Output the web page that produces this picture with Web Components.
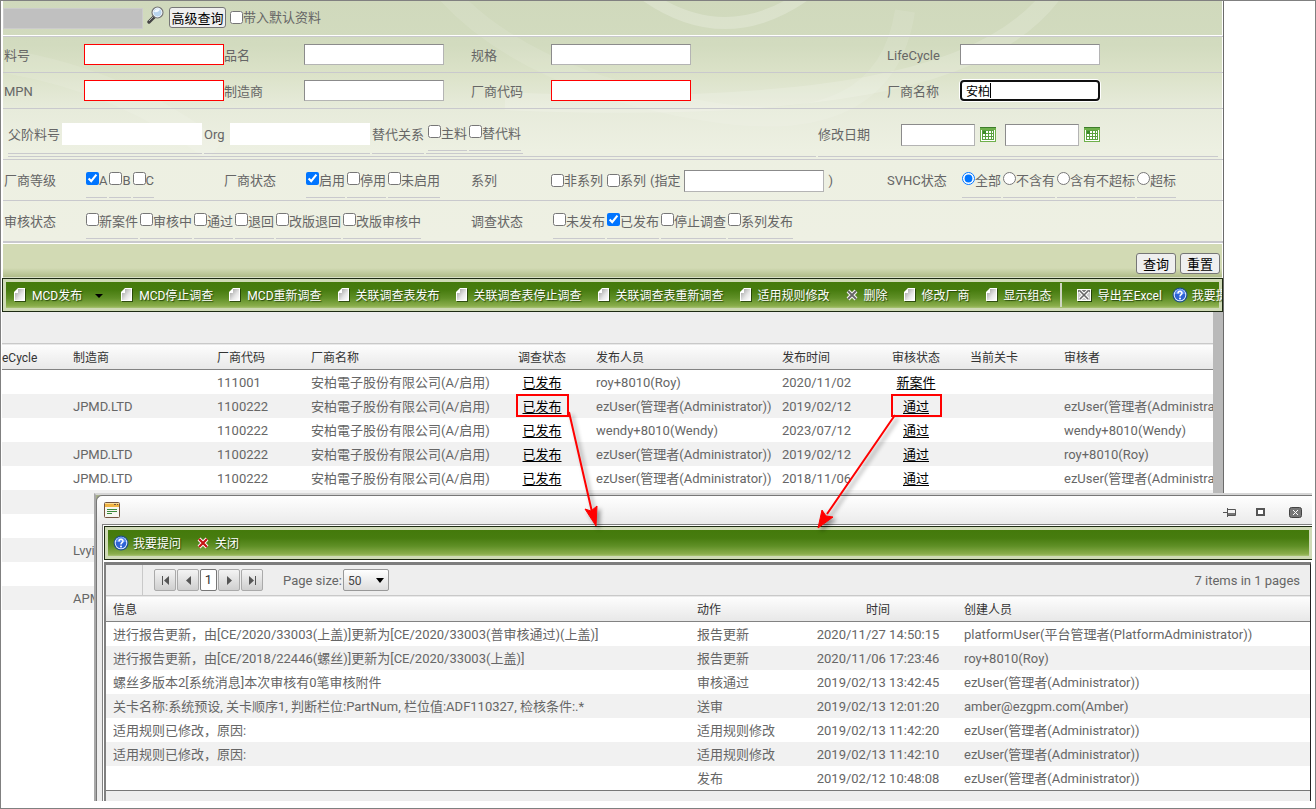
<!DOCTYPE html>
<html lang="zh-CN">
<head>
<meta charset="utf-8">
<title>MCD 发布管理</title>
<style>
  html, body { margin: 0; background: #fff; }
  body { font: 13px/18px Roboto, "Noto Sans CJK SC", sans-serif; color: #666; }
</style>
</head>
<body>
<page-frame>
  <app-panel>
    <quick-bar></quick-bar>
    <criteria-form></criteria-form>
    <form-actions></form-actions>
    <tool-bar>
      <tool-item icon="page" arrow>MCD发布</tool-item>
      <tool-item icon="page">MCD停止调查</tool-item>
      <tool-item icon="page">MCD重新调查</tool-item>
      <tool-item icon="page">关联调查表发布</tool-item>
      <tool-item icon="page">关联调查表停止调查</tool-item>
      <tool-item icon="page">关联调查表重新调查</tool-item>
      <tool-item icon="page">适用规则修改</tool-item>
      <tool-item icon="cross">删除</tool-item>
      <tool-item icon="page">修改厂商</tool-item>
      <tool-item icon="page">显示组态</tool-item>
      <tool-item icon="excel" divided>导出至Excel</tool-item>
      <tool-item icon="help">我要提问</tool-item>
    </tool-bar>
    <survey-grid></survey-grid>
  </app-panel>
  <history-window slot="overlay">
    <tool-bar slot="tools">
      <tool-item icon="help">我要提问</tool-item>
      <tool-item icon="close">关闭</tool-item>
    </tool-bar>
    <history-grid></history-grid>
  </history-window>
  <call-outs slot="overlay"></call-outs>
</page-frame>

<script>
const define = (name, html) => {
  const template = document.createElement('template');
  customElements.define(name, class extends HTMLElement {
    connectedCallback() {
      if (this.shadowRoot) return;
      template.innerHTML = typeof html === 'function' ? html(this) : html;
      this.attachShadow({ mode: 'open' }).append(template.content.cloneNode(true));
    }
  });
};

const ICONS = {
  page: `<svg width="12" height="14" viewBox="0 0 12 14"><defs><linearGradient id="g" x1="0" y1="0" x2="1" y2="1"><stop offset="0" stop-color="#9a9a9a"/><stop offset=".6" stop-color="#e6e6e6"/><stop offset="1" stop-color="#fff"/></linearGradient></defs><path d="M3 1h9v13H1V4z" fill="#1e3a05" opacity=".8"/><path d="M4 0h7v13H0V4z" fill="#fff"/><path d="M4 1h6v11H1V5h3z" fill="url(#g)"/><path d="M4 1v4H1z" fill="#fff"/></svg>`,
  cross: `<svg width="13" height="12" viewBox="0 0 13 12"><path d="M2 2l8 8M10 2l-8 8" stroke="#f4f4f4" stroke-width="4"/><path d="M2 2l8 8M10 2l-8 8" stroke="#666" stroke-width="1.800"/></svg>`,
  close: `<svg width="13" height="12" viewBox="0 0 13 12"><path d="M2 2l8 8M10 2l-8 8" stroke="#fff" stroke-width="4"/><path d="M2 2l8 8M10 2l-8 8" stroke="#c31313" stroke-width="2.200"/></svg>`,
  excel: `<svg width="15" height="13" viewBox="0 0 15 13"><path d="M1 1h14v12H1z" fill="#24430a"/><path d="M0 0h14v12H0z" fill="#fff"/><path d="M1 1h12v2H1z" fill="#777"/><path d="M1 3h12v8H1z" fill="#ccc"/><path d="M3 2l8 8M11 2l-8 8" stroke="#fff" stroke-width="3.600"/><path d="M3 2l8 8M11 2l-8 8" stroke="#666" stroke-width="1.600"/></svg>`,
  help: `<svg width="16" height="16" viewBox="0 0 16 16"><circle cx="8" cy="8" r="7.500" fill="#1d4f86"/><circle cx="8" cy="8" r="6.300" fill="#dfeaff"/><circle cx="8" cy="8" r="5.300" fill="#2e63d6"/><path d="M3 7a5 5 0 0 1 10 0z" fill="#5b8cf0"/><path d="M6 6.500c0-2.800 4-2.800 4-.3 0 1.500-2 1.500-2 3.200" fill="none" stroke="#fff" stroke-width="1.500"/><circle cx="8" cy="11.500" r="1" fill="#fff"/></svg>`,
  search: `<svg width="17" height="18" viewBox="0 0 17 18"><path d="M2 16l5-5" stroke="#444" stroke-width="3.400" stroke-linecap="round"/><path d="M2 15l4-4" stroke="#aaa" stroke-width="1"/><circle cx="10.500" cy="6.500" r="5.400" fill="#b9d4ee" stroke="#777" stroke-width="1.400"/><circle cx="10.500" cy="6.500" r="4.400" fill="none" stroke="#f4f8fc"/><path d="M7 6a4 4 0 0 1 6-2.500c-1 2-3 3-6 2.500z" fill="#f3f9ff"/></svg>`,
  calendar: `<svg width="16" height="15" viewBox="0 0 16 15"><path d="M0 0h16v15H0z" fill="#6fb04b"/><path d="M0 0h16v1H0z" fill="#3d7d2a"/><path d="M1 3h14v11H1z" fill="#fff"/><path d="M2 3h12v10H2z" fill="#59a23f"/><path d="M3 5h2v2H3zM6 4h2v2H6zM9 4h2v2H9zM12 4h1v2h-1zM3 7h2v2H3zM6 7h2v2H6zM9 7h2v2H9zM12 7h1v2h-1zM3 10h2v2H3zM6 10h2v2H6zM9 10h2v2H9zM12 10h1v2h-1z" fill="#fff"/><path d="M3 4h3v3H3z" fill="#3d8c2a"/></svg>`
};

const INPUT = `
  input { font: inherit; }
  input[type=text] { box-sizing: border-box; width: 100%; height: 21px; padding: 0 5px; border: 1px solid #8b8b8b; border-right-color: #b4b4b4; border-bottom-color: #b4b4b4; border-radius: 0; background: #fff; outline: 0; color: #000; font-size: 12px; }
  button { font: 13px/17px "Noto Sans CJK SC", sans-serif; color: #000; box-sizing: border-box; height: 21px; border: 1px solid #767676; border-radius: 3px; background: #efefef; padding: 0; white-space: nowrap; }
`;

define('page-frame', `<style>
  :host { display: block; position: relative; box-sizing: border-box; min-height: 100vh; border: 1px solid #808080; background: #fff; overflow: hidden; }
</style><slot></slot><slot name="overlay"></slot>`);

define('app-panel', `<style>
  :host { display: block; box-sizing: border-box; width: calc(100% - 91px); padding-left: 1px; border-right: 1px solid #6b6b6b; overflow: hidden; position: relative; }
  .swirl { position: absolute; left: 2px; top: 0; width: 1219px; height: 240px; }
  .back { position: absolute; left: 2px; right: 1px; top: 0; height: 240px; background: linear-gradient(#d0d9bc, #d2dbbf 44px, #dbe2c8 72px, #e7ebdb 108px, #edf0e2 150px, #eef0e3); overflow: hidden; }
  .front { position: relative; }
</style>
<div class="back"><svg class="swirl" viewBox="0 0 1219 240" fill="none" stroke="#fff" aria-hidden="true">
  <path d="M640 -6Q720 50 800 -6" stroke-width="12" opacity=".22"/>
  <path d="M1050 -10Q1000 60 860 85T500 100" stroke-width="18" opacity=".16"/>
  <path d="M440 -10Q520 80 700 110T900 10" stroke-width="20" opacity=".1"/>
  <path d="M0 60Q120 80 210 150" stroke-width="24" opacity=".1"/>
</svg></div>
<div class="front"><slot></slot></div>`);

define('quick-bar', `<style>${INPUT}
  :host { display: flex; align-items: center; height: 34px; margin-left: 1px; border-bottom: 1px solid #fff; white-space: nowrap; }
  input[type=text] { width: 140px; height: 21px; background: #c0c0c0; border: 1px solid #ccc; }
  .find { display: grid; width: 17px; height: 18px; border: 0; background: none; margin: 0 5px 6px 4px; }
  .find + button { width: 57px; margin-bottom: 1px; }
  label { display: flex; align-items: center; margin-left: 4px; }
  label input { margin: 0 0 2px; width: 13px; height: 13px; }
</style>
<input type="text" disabled aria-label="关键字"><button class="find" aria-label="搜索">${ICONS.search}</button><button>高级查询</button><label><input type="checkbox">带入默认资料</label>`);

define('text-field', el => `<style>${INPUT}
  :host { display: grid; grid-template-columns: var(--label, 80px) var(--field, 140px); align-items: center; white-space: nowrap; }
  :host([required]) input { border: 1px solid #f00; }
  :host([plain]) input { border: 1px solid #fff; height: 22px; }
  :host([active]) input { border: 2px solid #101010; border-radius: 4px; padding-left: 4px; box-shadow: 0 0 0 1px #fff; background: linear-gradient(#000, #000) 28px 1px / 1px 15px no-repeat #fff; }
  label { padding-top: 2px; }
</style>
<label for="f">${el.getAttribute('label')}</label><input type="text" id="f" value="${el.getAttribute('value') || ''}">`);

define('check-item', el => `<style>
  :host { display: block; box-sizing: border-box; height: 36px; padding-top: 8px; border-bottom: 1px solid #c9c9cd; white-space: nowrap; }
  label { display: flex; align-items: start; line-height: 22px; }
  input { margin: 2px 0 0; width: 13px; height: 13px; }
</style>
<label><input type="${el.getAttribute('type') || 'checkbox'}" ${el.hasAttribute('checked') ? 'checked' : ''}><span><slot></slot></span></label>`);

define('check-group', el => `<style>
  :host { display: grid; grid-template-columns: var(--label, 80px) auto; align-items: center; justify-content: start; white-space: nowrap; }
  #name { padding-top: 2px; }
  .items { display: flex; gap: 2px; padding-left: 2px; }
</style>
<span id="name">${el.getAttribute('label')}</span><div class="items" role="group" aria-labelledby="name"><slot></slot></div>`);

define('date-field', el => `<style>${INPUT}
  :host { display: flex; align-items: center; gap: 5px; }
  input[type=text] { width: 74px; height: 22px; }
  button { display: grid; width: 16px; height: 15px; border: 0; background: none; }
</style>
<input type="text" aria-label="${el.getAttribute('label')}"><button aria-label="选择日期">${ICONS.calendar}</button>`);

define('series-field', `<style>${INPUT}
  :host { display: flex; align-items: center; line-height: 20px; white-space: nowrap; padding-top: 2px; }
  .name { width: 80px; }
  .opt { display: flex; align-items: center; margin-right: 4px; }
  .opt input { width: 13px; height: 13px; margin: 0 0 2px; }
  .text { display: flex; align-items: center; gap: 4px; }
  .text input { width: 140px; height: 22px; }
</style>
<span class="name">系列</span>
<label class="opt"><input type="checkbox">非系列</label><label class="opt"><input type="checkbox">系列</label>
<label class="text">(指定<input type="text">)</label>`);

define('criteria-form', `<style>
  :host { display: block; margin-left: 1px; border-top: 1px solid #c9c9cd; border-bottom: 1px solid #c9c9cd; }
  .row { display: grid; grid-template-columns: 220px 247px 416px 1fr; align-items: center; box-sizing: border-box; height: 36px; padding-left: 1px; border-bottom: 1px solid #c9c9cd; }
  .tall { height: 41px; }
  .states { grid-template-columns: 467px 1fr; }
  .wide { --label: 73px; }
  .parts { display: flex; align-items: end; height: 51px; padding: 0 5px 2px; }
  .inner { display: flex; align-items: end; gap: 2px; box-sizing: border-box; height: 48px; border-bottom: 1px solid #c9c9cd; }
  .left { flex: 0 0 808px; }
  .left text-field { box-sizing: border-box; height: 40px; border-bottom: 1px solid #c9c9cd; margin-bottom: 2px; }
  .one { --label: 54px; } .two { --label: 26px; }
  .rel { display: flex; align-items: center; box-sizing: border-box; width: 52px; height: 40px; padding-top: 2px; margin-bottom: 2px; border-bottom: 1px solid #c9c9cd; white-space: nowrap; }
  .checks { display: flex; gap: 2px; padding: 0 2px 2px; border-bottom: 1px solid #c9c9cd; margin-bottom: 2px; }
  .checks check-item { height: 28px; padding-top: 0; }
  .right { flex: 1; margin-left: 2px; align-items: center; gap: 9px; padding-top: 4px; }
  .right span { width: 74px; }
</style>
<div class="row"><text-field label="料号" required></text-field><text-field label="品名"></text-field><text-field label="规格"></text-field><text-field class="wide" label="LifeCycle"></text-field></div>
<div class="row"><text-field label="MPN" required></text-field><text-field label="制造商"></text-field><text-field label="厂商代码" required></text-field><text-field class="wide" label="厂商名称" value="安柏" active></text-field></div>
<div class="row parts">
  <div class="inner left"><text-field class="one" label="父阶料号" plain></text-field><text-field class="two" label="Org" plain></text-field><span class="rel">替代关系</span><div class="checks"><check-item>主料</check-item><check-item>替代料</check-item></div></div>
  <div class="inner right"><span>修改日期</span><date-field label="修改日期起"></date-field><date-field label="修改日期止"></date-field></div>
</div>
<div class="row tall">
  <check-group label="厂商等级"><check-item checked>A</check-item><check-item>B</check-item><check-item>C</check-item></check-group>
  <check-group label="厂商状态"><check-item checked>启用</check-item><check-item>停用</check-item><check-item>未启用</check-item></check-group>
  <series-field></series-field>
  <check-group class="wide" label="SVHC状态"><check-item type="radio" checked>全部</check-item><check-item type="radio">不含有</check-item><check-item type="radio">含有不超标</check-item><check-item type="radio">超标</check-item></check-group>
</div>
<div class="row tall states">
  <check-group label="审核状态"><check-item>新案件</check-item><check-item>审核中</check-item><check-item>通过</check-item><check-item>退回</check-item><check-item>改版退回</check-item><check-item>改版审核中</check-item></check-group>
  <check-group label="调查状态"><check-item>未发布</check-item><check-item checked>已发布</check-item><check-item>停止调查</check-item><check-item>系列发布</check-item></check-group>
</div>`);

define('form-actions', `<style>${INPUT}
  :host { display: flex; justify-content: end; align-items: center; gap: 4px; box-sizing: border-box; height: 35px; margin-left: 1px; margin-right: 1px; padding: 6px 2px 0; border-top: 1px solid #fff; border-bottom: 1px solid #d9dfc6; background: linear-gradient(#d2dab4, #d2dab4 24px, #b0bc89); }
  button { width: 40px; }
</style><button>查询</button><button>重置</button>`);

define('tool-bar', `<style>
  :host { display: flex; align-items: center; gap: 16px; box-sizing: border-box; height: 34px; padding-left: 11px; border: 1px solid #1d2a12; font-size: 12px; color: #fff; white-space: nowrap; overflow: hidden;
    background: linear-gradient(#447a0b, #477c0f 8px, #5f8f26 16px, #8bae4c 24px, #a9c476) 3px 3px / calc(100% - 6px) 26px no-repeat #cfdab6; }
</style><slot></slot>`);

define('tool-item', el => `<style>
  :host { display: block; flex: none; }
  :host([divided]) { margin: 0 -6px 0 -8px; padding-left: 15px; border-left: 2px solid #cfd6c2; }
  button { display: flex; align-items: center; padding: 2px 0 0; border: 0; background: none; font: inherit; color: #fff; line-height: 22px; text-shadow: 1px 1px 1px #26450a; }
  .icon { display: flex; flex: none; width: 18px; padding-bottom: 2px; }
  :host([icon=excel]) .icon { width: 21px; }
  :host([icon=help]) .icon { width: 20px; }
  .arrow { width: 0; margin: 0 2px 0 13px; border: 4px solid transparent; border-top-color: #000; border-bottom: 0; }
</style>
<button><span class="icon">${ICONS[el.getAttribute('icon')]}</span><slot></slot>${el.hasAttribute('arrow') ? '<span class="arrow"></span>' : ''}</button>`);

const TABLE = `
  table { width: 100%; border-collapse: collapse; table-layout: fixed; }
  th { box-sizing: border-box; height: 26px; padding: 2px 0 0 7px; font-size: 12px; font-weight: 400; color: #333; text-align: left; white-space: nowrap; }
  thead { background: linear-gradient(#fdfdfd, #e8e8e8); border-top: 1px solid #c9c9c9; border-bottom: 1px solid #828282; }
  td { box-sizing: border-box; height: 24px; padding: 2px 0 0 7px; white-space: nowrap; line-height: 20px; }
  td:last-child { overflow: hidden; }
  tbody tr { background: #fff; }
  tbody tr:nth-child(even) { background: #f1f1f1; }
  .mid { padding-left: 0; text-align: center; }
  a { color: #000; text-underline-offset: 2px; }
`;
const tableOf = (cols, rows) => `<table><colgroup>${cols.map(c => `<col style="width:${c[1]}">`).join('')}</colgroup>
  <thead><tr>${cols.map(c => `<th class="${c[2] || ''}">${c[0]}</th>`).join('')}</tr></thead>
  <tbody>${rows.map(r => `<tr>${cols.map((c, i) => `<td class="${c[2] || ''}">${c[3] && r[i] ? `<a href="#">${r[i]}</a>` : (r[i] || '')}</td>`).join('')}</tr>`).join('')}</tbody></table>`;

const ADMIN = 'ezUser(管理者(Administrator))', ANBO = '安柏電子股份有限公司(A/启用)';
define('survey-grid', `<style>${TABLE}
  :host { display: block; padding-right: 10px; background: #b9b9b9; }
  .pager { height: 31px; background: #eee; }
  th:first-child { padding-left: 0; }
</style><div class="pager"></div>` + tableOf([
  ['eCycle', '64px'], ['制造商', '144px'], ['厂商代码', '94px'], ['厂商名称', '191px'],
  ['调查状态', '94px', 'mid', true], ['发布人员', '186px'], ['发布时间', '94px'],
  ['审核状态', '94px', 'mid', true], ['当前关卡', '94px'], ['审核者', 'auto']
], [
  ['', '', '111001', ANBO, '已发布', 'roy+8010(Roy)', '2020/11/02', '新案件'],
  ['', 'JPMD.LTD', '1100222', ANBO, '已发布', ADMIN, '2019/02/12', '通过', '', ADMIN],
  ['', '', '1100222', ANBO, '已发布', 'wendy+8010(Wendy)', '2023/07/12', '通过', '', 'wendy+8010(Wendy)'],
  ['', 'JPMD.LTD', '1100222', ANBO, '已发布', ADMIN, '2019/02/12', '通过', '', 'roy+8010(Roy)'],
  ['', 'JPMD.LTD', '1100222', ANBO, '已发布', ADMIN, '2018/11/06', '通过', '', ADMIN],
  [], [], ['', 'Lvyi'], [], ['', 'APM']
]));

define('history-window', `<style>
  :host { display: block; position: absolute; left: 93px; right: 3px; top: 492px; box-sizing: border-box; border-top: 2px solid #d6d6d6; border-left: 2px solid #a8a8a8; background: #a8b08c; }
  .win { border-top: 1px solid #777; border-left: 1px solid #777; border-top-left-radius: 6px; background: linear-gradient(#fff, #e9e9e9 30px, #eee); padding-left: 5px; }
  header { display: flex; align-items: center; justify-content: space-between; height: 28px; padding: 0 10px 0 2px; }
  nav { display: flex; align-items: center; gap: 20px; padding-top: 4px; }
  button { display: grid; border: 0; background: none; padding: 0; }
  .last { margin-left: 4px; }
  .body { border: 1px solid #808080; border-right: 0; border-bottom: 0; padding: 1px 0 0 1px; background: #fff; }
  .grid { margin-top: 2px; border-left: 2px solid #808080; border-right: 1px solid #222; border-top: 3px solid #7d7d7d; margin-right: 1px; }
  .tools { background: #d3dcbc; }
  ::slotted(tool-bar) { padding-left: 8px; border-right: 0; }
</style>
<div class="win">
  <header>
    <svg width="16" height="16" viewBox="0 0 16 16" aria-hidden="true"><rect x=".5" y=".5" width="15" height="15" rx="1" fill="#f7f7f2" stroke="#74553f"/><path d="M1 1h14v4H1z" fill="#f0b443"/><path d="M1 1h14v1H1z" fill="#f9dc95"/><path d="M10 2h2v1h-2zM13 2h1v1h-1z" fill="#74553f"/><path d="M3 7.500h10M3 9.500h10M3 11.500h5" stroke="#3b8a3b"/></svg>
    <nav>
      <button aria-label="固定"><svg width="13" height="9" viewBox="0 0 13 9"><path d="M0 4.500h4M4.500 0v9M5 1.500h7.500v6H5" fill="none" stroke="#555"/><path d="M5 5h7v2H5z" fill="#777"/></svg></button>
      <button aria-label="最大化"><svg width="9" height="8" viewBox="0 0 9 8"><path d="M1 1h7v6H1z" fill="#fff" stroke="#555" stroke-width="2"/></svg></button>
      <button class="last" aria-label="关闭窗口"><svg width="13" height="11" viewBox="0 0 13 11"><rect x=".5" y=".5" width="12" height="10" rx="2" fill="#777" stroke="#444"/><path d="M4 3l5 5M9 3l-5 5" stroke="#fff"/></svg></button>
    </nav>
  </header>
  <div class="body">
    <div class="tools"><slot name="tools"></slot></div>
    <div class="grid"><slot></slot></div>
  </div>
</div>`);

const pagerIcon = d => `<svg width="9" height="9" viewBox="0 0 9 9"><path d="${d}" fill="#555"/></svg>`;
define('history-grid', `<style>${TABLE}
  :host { display: block; }
  .pager { display: flex; align-items: center; height: 30px; background: #eee; }
  .blank { width: 36px; height: 30px; border-right: 1px solid #c9c9c9; margin-right: 11px; }
  .btns { display: flex; gap: 1px; margin-right: 20px; }
  .btns button { display: grid; place-content: center; box-sizing: border-box; width: 22px; height: 22px; padding: 0; border: 1px solid #aaa; border-radius: 2px; background: linear-gradient(#f4f4f4, #cfcfcf); font: inherit; color: #333; }
  .btns .on { width: 17px; background: #fff; border-color: #777; }
  label { margin-right: 1px; padding-top: 2px; }
  .size { position: relative; display: flex; }
  select { appearance: none; box-sizing: border-box; width: 46px; height: 22px; margin: 0; padding: 1px 4px 0; border: 1px solid #999; border-radius: 2px; background: linear-gradient(#fff, #ddd); font: inherit; font-size: 12px; color: #444; }
  .size i { position: absolute; right: 5px; top: 9px; border: 4px solid transparent; border-top: 5px solid #000; border-bottom: 0; pointer-events: none; }
  .count { margin-left: auto; padding: 2px 10px 0 0; }
  .foot { height: 10px; border-top: 1px solid #777; background: #ededed; }
</style>
<div class="pager"><span class="blank"></span>
  <div class="btns"><button aria-label="首页">${pagerIcon('M1 0h1v9H1zM8 0v9L3 4.500z')}</button><button aria-label="上一页">${pagerIcon('M7 0v9L2 4.500z')}</button><button class="on">1</button><button aria-label="下一页">${pagerIcon('M2 0v9l5-4.500z')}</button><button aria-label="末页">${pagerIcon('M7 0h1v9H7zM1 0v9l5-4.500z')}</button></div>
  <label for="size">Page size:</label><span class="size"><select id="size"><option>50</option></select><i></i></span>
  <span class="count">7 items in 1 pages</span>
</div>` + tableOf([
  ['信息', '584px'], ['动作', '109px'], ['时间', '158px', 'mid'], ['创建人员', 'auto']
], [
  ['进行报告更新，由[CE/2020/33003(上盖)]更新为[CE/2020/33003(普审核通过)(上盖)]', '报告更新', '2020/11/27 14:50:15', 'platformUser(平台管理者(PlatformAdministrator))'],
  ['进行报告更新，由[CE/2018/22446(螺丝)]更新为[CE/2020/33003(上盖)]', '报告更新', '2020/11/06 17:23:46', 'roy+8010(Roy)'],
  ['螺丝多版本2[系统消息]本次审核有0笔审核附件', '审核通过', '2019/02/13 13:42:45', ADMIN],
  ['关卡名称:系统预设, 关卡顺序1, 判断栏位:PartNum, 栏位值:ADF110327, 检核条件:.*', '送审', '2019/02/13 12:01:20', 'amber@ezgpm.com(Amber)'],
  ['适用规则已修改，原因:', '适用规则修改', '2019/02/13 11:42:20', ADMIN],
  ['适用规则已修改，原因:', '适用规则修改', '2019/02/13 11:42:10', ADMIN],
  ['', '发布', '2019/02/12 10:48:08', ADMIN]
]) + '<div class="foot"></div>');

define('call-outs', `<style>
  :host { display: block; position: absolute; left: -1px; top: -1px; pointer-events: none; }
  svg { display: block; }
  .lines { filter: drop-shadow(3px 3px 2px rgba(0,0,0,.4)); }
  .boxes { position: absolute; left: 0; top: 0; }
  rect { fill: none; stroke: #f00; stroke-width: 2; }
</style>
<svg class="lines" width="960" height="540" viewBox="0 0 960 540" aria-hidden="true">
  <path d="M569 412L592 512M895 415L827 514" stroke="#f00" stroke-width="2"/>
  <path d="M596 526L585 509L591 511L597 506ZM818 528L822 510L826 516L833 517Z" fill="#f00" stroke="#f00"/>
</svg>
<svg class="boxes" width="960" height="540" viewBox="0 0 960 540" aria-hidden="true">
  <rect x="517" y="395" width="51" height="21"/><rect x="892" y="395" width="49" height="21"/>
</svg>`);
</script>
</body>
</html>
